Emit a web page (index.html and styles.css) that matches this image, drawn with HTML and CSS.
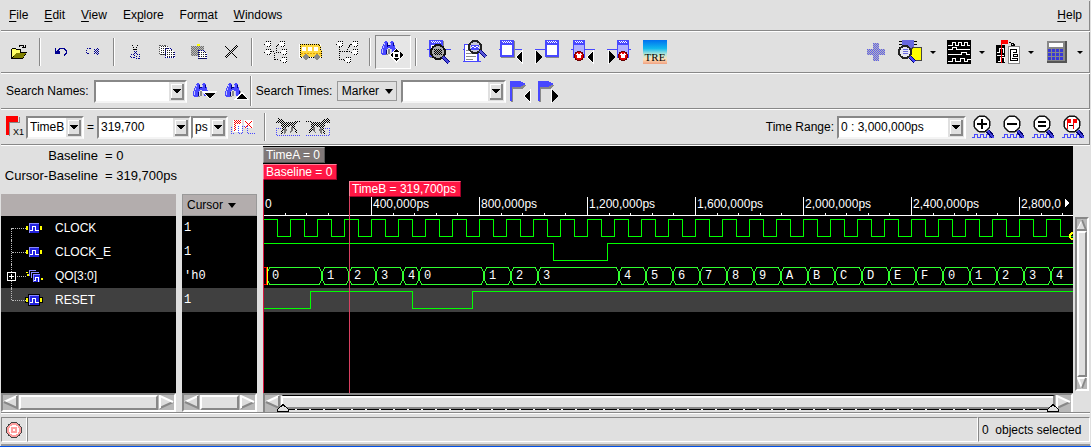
FILE: index.html
```
<!DOCTYPE html>
<html lang="en">
<head>
  <meta charset="UTF-8" />
  <meta name="viewport" content="width=device-width, initial-scale=1.0" />
  <title>Waveform Viewer</title>
  <link rel="stylesheet" href="styles.css">
</head>
<body>
  <svg class="defs" width="0" height="0" aria-hidden="true">
    <defs>
      <pattern id="dk" width="2" height="2" patternUnits="userSpaceOnUse"><path fill="#000" d="M0 0h1v1h-1zM1 1h1v1h-1z"/></pattern>
      <pattern id="db" width="2" height="2" patternUnits="userSpaceOnUse"><path fill="#000090" d="M0 0h1v1h-1zM1 1h1v1h-1z"/></pattern>
      <pattern id="dl" width="2" height="2" patternUnits="userSpaceOnUse"><path fill="#4848ff" d="M0 0h1v1h-1zM1 1h1v1h-1z"/></pattern>
      <pattern id="dr" width="2" height="2" patternUnits="userSpaceOnUse"><path fill="#f00" d="M0 0h1v1h-1zM1 1h1v1h-1z"/></pattern>
      <pattern id="grid" width="2" height="2" patternUnits="userSpaceOnUse"><path fill="#fff" d="M0 0h2v2h-2z"/><path fill="#222" d="M0 0h1v1h-1z"/></pattern>
      <linearGradient id="sky" x1="0" y1="0" x2="0" y2="1"><stop offset="0" stop-color="#0070f0"/><stop offset=".35" stop-color="#10b8ee"/><stop offset=".6" stop-color="#b8e8d8"/><stop offset=".8" stop-color="#ffe0b8"/><stop offset="1" stop-color="#f0a080"/></linearGradient>
      <symbol id="binoc" viewBox="0 0 16 15">
        <path fill="#888" d="M7 8h2v5H7zM5 13h2v1H2v-1zM15 8h1v5h-5v-1h4z"/>
        <path fill="#4848ff" d="M3 1h1V0h2v1h1v3h2V1h1V0h2v1h1v3h1v3h1v5h-1v1h-3v-1h-1V8H9V7H7v1H6v5H5v1H1v-1H0V8h1V5h1V3h1z"/>
        <path fill="#00008a" d="M6 2h1v4H6zM12 2h1v3h-1zM7 4h2v1H7zM5 9h1v4H5zM14 8h1v4h-1z"/>
        <path fill="#c0c0ff" d="M3 2h1v2H3zM9 2h1v2H9zM1 8h1v4H1zM2 5h1v2H2zM10 8h1v4h-1z"/>
      </symbol>
      <symbol id="doc" viewBox="0 0 24 24">
        <path fill="#4848ff" d="M0 9h24v1H0zM2 0h14v17H2z"/>
        <path fill="#fff" d="M4 5h10v10H4z"/>
        <path fill="none" stroke="#fff" d="M4 1.500h1M6 1.500h1M8 1.500h1M10 1.500h1M12 1.500h1M5 2.500h1M7 2.500h1M9 2.500h1M11 2.500h1M13 2.500h1"/>
        <path fill="#888" d="M16 1h1v17H3v-1h13z"/>
      </symbol>
      <symbol id="doc-err" viewBox="0 0 24 24">
        <path fill="#4848ff" d="M0 9h24v1H0zM2 0h12v18H2z"/><path fill="#b0b0ff" d="M3 5h10v12H3z"/>
        <path stroke="#fff" d="M4 1.500h1M6 1.500h1M8 1.500h1M10 1.500h1M5 2.500h1M7 2.500h1M9 2.500h1M11 2.500h1"/>
        <circle cx="8" cy="16" r="5" fill="#600"/><circle cx="8" cy="16" r="4.300" fill="#e00000"/><path stroke="#fff" stroke-width="2" d="M6 14l4 4M10 14l-4 4"/>
      </symbol>
      <symbol id="lens" viewBox="0 0 24 24">
        <path stroke="#00006a" stroke-width="4" d="M15 15l6 7"/><path stroke="#4040d8" stroke-width="2" d="M15 15l6 7"/>
        <circle cx="10" cy="9" r="8" fill="#fff" stroke="#777" stroke-width="2"/><circle cx="10" cy="9" r="8" fill="none" stroke="#111"/>
      </symbol>
      <symbol id="zoomwave" viewBox="0 0 24 24">
        <path fill="none" stroke="#4848ff" d="M0 22.500h2.500V19.500h3V22.500h3V19.500h3V22.500h3V19.500h3V22.500h4"/><use href="#lens" width="24" height="24"/>
      </symbol>
      <symbol id="tri-l" viewBox="0 0 8 14"><path fill="#fff" d="M8 0v14L0 7z"/><path fill="#000" d="M7 1v12L1 7z"/></symbol>
      <symbol id="tri-r" viewBox="0 0 8 14"><path fill="#fff" d="M0 0v14l8-7z"/><path fill="#000" d="M1 1v12l6-6z"/></symbol>
      <symbol id="flag" viewBox="0 0 24 24"><path fill="#888" d="M1 1h11l4 3-4 4H3v13H1z"/><path fill="#4848ff" d="M0 0h11v1h2v1h2v2h-2v1h-2v1H2v14H0z"/></symbol>
      <symbol id="node" viewBox="0 0 7 6"><path fill="#fff" stroke="#000" stroke-dasharray="1 1" d="M.5 2.500l2-2h4v5h-4l-2-2z"/></symbol>
      <symbol id="dog" viewBox="0 0 24 18">
        <path fill="url(#dk)" d="M0 3l2-2V0h2v1h2l2 3h9l3-1h4v1h-3l-2 2v4l2 2v3h-2v-2l-3-3-1-2-4 1-2 1-2 4-1 3H5v-3l1-3-1-4-1-2H0z"/>
        <path fill="#777" d="M8 10h2l1 2-2 4H8zM15 9h2v3l-2 3h-1l1-3z"/>
        <path fill="none" stroke="#4848ff" stroke-dasharray="1 1" d="M5 10.500H.5v7H24"/>
      </symbol>
      <symbol id="signal" viewBox="0 0 18 14">
        <path fill="#ff0" d="M1 5h2v4h-2zM15 5h2v4h-2z"/><path fill="#88f" d="M4 2h10v10H4z"/><path fill="#22d" d="M5 3h9v9H5z"/>
        <path fill="none" stroke="#fff" d="M5 9.500h2.500V5.500h3v4h3"/>
      </symbol>
    </defs>
  </svg>

  <nav class="menubar">
    <a href="#file"><u>F</u>ile</a>
    <a href="#edit"><u>E</u>dit</a>
    <a href="#view"><u>V</u>iew</a>
    <a href="#explore">Ex<u>p</u>lore</a>
    <a href="#format">For<u>m</u>at</a>
    <a href="#windows"><u>W</u>indows</a>
    <a class="help" href="#help"><u>H</u>elp</a>
  </nav>

  <div class="toolbar tools">
    <button class="small" aria-label="Open"><svg width="16" height="16"><path fill="#000" d="M0 5h1V4h4v1h5v3h6l-4 7H0z"/><path fill="#ff6" d="M1 5h4v1h4v3H5l-4 5z"/><path fill="#808000" d="M5 9h10l-3 5H2z"/><path fill="none" stroke="#000" d="M8 2.500l1-1h3l1 2M11 3.500h3M14.500 1v3"/></svg></button>
    <span class="sep"></span>
    <button class="small" aria-label="Undo"><svg width="16" height="16"><path fill="none" stroke="#000090" d="M4 7.500l3-3h4l2 2v3l-2 2"/><path fill="#000090" d="M2 4h1v3h4v3H2z"/></svg></button>
    <button class="small" aria-label="Redo"><svg width="16" height="16"><path fill="none" stroke="#000090" stroke-dasharray="1 1" d="M5 4.500H3L1.500 7v2l2 1M5 4.500l2 1"/><path fill="url(#db)" d="M9 5h4v5H9zM12 4h2v7h-2z"/></svg></button>
    <span class="sep"></span>
    <button class="small" aria-label="Cut"><svg width="16" height="16"><path fill="none" stroke="#000" stroke-dasharray="1 1" d="M5.500 1l2 6M10.500 1l-2 6"/><path fill="url(#db)" d="M7 7h3l1 3-1 1-2-2-2 2z"/><path fill="none" stroke="#000090" stroke-dasharray="1 1" d="M3.500 10.500h4v3h-4zM9.500 10.500h3v4h-3z"/></svg></button>
    <button class="small" aria-label="Copy"><svg width="16" height="16"><path fill="url(#grid)" stroke="#555" stroke-dasharray="1 1" d="M.5 1.500h6l3 2v7h-9z"/><path fill="url(#grid)" stroke="#000090" stroke-dasharray="1 1" d="M6.500 4.500h5l4 4v5h-9z"/></svg></button>
    <button class="small" aria-label="Paste"><svg width="16" height="16"><path fill="#bbb" d="M0 2h13v10H0z"/><path fill="url(#dk)" opacity=".4" d="M0 2h13v10H0z"/><path fill="#ff0" d="M6 0h3v2H6z"/><path fill="url(#grid)" stroke="#000090" stroke-dasharray="1 1" d="M7.500 6.500h5l3 3v5h-8z"/></svg></button>
    <button class="small" aria-label="Delete"><svg width="16" height="16"><path fill="none" stroke="url(#dk)" stroke-width="2" d="M2 2l12 12M14 2L2 14"/></svg></button>
    <span class="sep"></span>
    <button aria-label="Scope tree"><svg width="24" height="24"><use href="#node" x="1" y="1" width="7" height="6"/><use href="#node" x="1" y="9" width="7" height="6"/><use href="#node" x="15" y="1" width="7" height="6"/><use href="#node" x="17" y="9" width="7" height="6"/><use href="#node" x="17" y="17" width="7" height="6"/><path fill="none" stroke="#000" stroke-dasharray="1 1" d="M8 11.500h3v8h5M15 5l-2 2v5h3"/></svg></button>
    <button aria-label="Bus"><svg width="24" height="24"><path fill="#fff" d="M0 4h22v14H0z"/><path fill="#ffd840" d="M1 4h20l2 8v5H1z"/><path fill="none" stroke="#000" stroke-dasharray="1 1" d="M1.500 17V4.500h19l2 8v5z"/><path fill="#fff" d="M3 7h4v4H3zM9 7h4v4H9zM15 7h4v4h-4z"/><path stroke="#e0a000" stroke-dasharray="2 1" d="M2 13.500h20"/><path fill="#888" d="M4 16l3-2 3 2v2l-3 2-3-2zM15 16l3-2 3 2v2l-3 2-3-2z"/></svg></button>
    <button aria-label="Trace drivers"><svg width="24" height="24"><use href="#node" x="1" y="1" width="7" height="6"/><use href="#node" x="16" y="1" width="7" height="6"/><use href="#node" x="16" y="9" width="7" height="6"/><use href="#node" x="9" y="17" width="7" height="6"/><path fill="none" stroke="#000" stroke-dasharray="1 1" d="M4.500 7v12.500H9M5 11.500h6l5-8M12 11.500h4"/></svg></button>
    <span class="sep"></span>
    <button class="pressed" aria-label="Find"><svg width="24" height="24"><use href="#binoc" x="0" y="1" width="16" height="15"/><path fill="#fff" d="M8 15l7-7 8 7-8 8z"/><path fill="#000" d="M15 9l3 3h-6zM15 21l3-3h-6zM9 15l3-3v6zM22 15l-3-3v6zM14 14h3v3h-3z"/></svg></button>
    <span class="sep"></span>
    <button aria-label="Zoom window"><svg width="24" height="24"><use href="#doc" width="24" height="24"/><circle cx="11" cy="12" r="7" fill="#aaa" stroke="#111" stroke-width="2"/><path fill="url(#dk)" d="M7 9h8v6H7z"/><path stroke="#00008a" stroke-width="4" d="M16 17l6 6"/><path stroke="#4848d8" stroke-width="2" d="M16 17l6 6"/></svg></button>
    <button aria-label="Zoom text"><svg width="24" height="24"><path fill="#4848ff" d="M1 4h15v18H1zM0 9h1v1H0zM0 21h18v1H0z"/><path fill="#fff" d="M2 5h12v16H2z"/><path stroke="#888" d="M3 10.500h4M3 13.500h9M3 16.500h10M3 19.500h7"/><circle cx="12" cy="7" r="6" fill="#c8c8d8" stroke="#222" stroke-width="2"/><path fill="#4848ff" d="M8 5h8v5H8z"/><path fill="none" stroke="#fff" d="M8 8l2-2 2 2 2-2 2 2"/><path stroke="#000080" stroke-width="4" d="M17 11l6 6"/><path stroke="#5858d8" stroke-width="2" d="M17 11l6 6"/></svg></button>
    <button aria-label="Previous window"><svg width="24" height="24"><use href="#doc" x="-1" width="24" height="24"/><use href="#tri-l" x="16" y="10" width="8" height="14"/></svg></button>
    <button aria-label="Next window"><svg width="24" height="24"><use href="#doc" x="8" width="24" height="24"/><path stroke="#4848ff" d="M0 9.500h9"/><use href="#tri-r" x="0" y="10" width="8" height="14"/></svg></button>
    <button aria-label="Previous error"><svg width="24" height="24"><use href="#doc-err" width="24" height="24"/><use href="#tri-l" x="15" y="10" width="8" height="14"/></svg></button>
    <button aria-label="Next error"><svg width="24" height="24"><use href="#doc-err" x="8" width="24" height="24"/><path stroke="#4848ff" d="M0 9.500h9"/><use href="#tri-r" x="1" y="10" width="8" height="14"/></svg></button>
    <button aria-label="TRE"><svg width="24" height="24"><path fill="url(#sky)" d="M0 0h24v24H0z"/><text class="tre" x="12" y="21">TRE</text></svg></button>

    <span class="spacer"></span>
    <button class="small" aria-label="Add"><svg width="20" height="20"><path fill="#b8b8b8" d="M7 1h6v6h6v6h-6v6H7v-6H1V7h6z"/><path fill="url(#dl)" opacity=".8" d="M7 1h6v6h6v6h-6v6H7v-6H1V7h6z"/></svg></button>
    <button class="drop" aria-label="Design browser"><svg width="24" height="24"><path fill="#000" d="M1 1h18v1H1zM1 4h18v1H1zM1 7h18v1H1z"/><path fill="#6868e0" d="M4 0h12v11H4z"/><path fill="#ff0" stroke="#444" d="M9 12l7-5h7v13h-8z"/><path stroke="#000070" stroke-width="4" d="M11 16l6 6"/><path stroke="#4848ff" stroke-width="2" d="M11 16l6 6"/><circle cx="7" cy="12" r="6" fill="#e4e4f0" stroke="#222" stroke-width="2"/><path stroke="#6868e0" d="M5 9.500h5M5 11.500h5M5 13.500h5"/></svg><i></i></button>
    <button class="drop" aria-label="Waveform window"><svg width="24" height="24"><path fill="#000" d="M0 0h24v24H0z"/><path fill="none" stroke="#fff" d="M1 5.500h4v-3h3v3h3v-3h3v3h3v-3h3v3h3M1 9.500h4v-2h4v2h14M1 14.500h13v-2h5v2h4M1 21.500h4v-3h3v3h5v-3h4v3h3v-2h4"/></svg><i></i></button>
    <button class="drop" aria-label="Send to"><svg width="24" height="24"><path fill="#000" d="M0 5h9v18H0z"/><path fill="none" stroke="#fff" d="M1 12.500h2v-4h4v4M1 15.500h7M2 21.500h2v-4h4v4"/><path fill="#f00" d="M5 0h7v4H6v19H5z"/><path fill="none" stroke="#000" d="M13 2.500l4 1v3M15 4.500l2 2 2-2"/><path fill="#fff" stroke="#888" d="M12.500 6.500h11v17h-11z"/><path fill="none" stroke="#000" d="M14.500 9v12M15 9.500h5v3h-3M17 14.500h4v2h-4zM15 20.500h6v-2h-5"/></svg><i></i></button>
    <button class="drop" aria-label="Calculator"><svg width="24" height="24"><path fill="#555" d="M2 1h20v22H2z"/><path fill="#888" d="M2 1h18v20H2z"/><path fill="#fff" d="M4 3h14v4H4z"/><path stroke="#3838d8" stroke-width="3" stroke-dasharray="3 1" d="M3 10.500h16M3 14.500h16M3 18.500h16"/></svg><i></i></button>
  </div>

  <div class="toolbar search">
    <label for="names">Search Names:</label>
    <select id="names" class="w-names"><option></option></select>
    <button class="plain" aria-label="Search names down"><svg width="28" height="24"><use href="#binoc" x="3" y="4" width="16" height="15"/><path fill="#fff" d="M12 12h15l-7 9z"/><path fill="#000" d="M14 14h11l-5 6z"/></svg></button>
    <button class="plain" aria-label="Search names up"><svg width="28" height="24"><use href="#binoc" x="3" y="4" width="16" height="15"/><path fill="#fff" d="M12 21h15l-7-9z"/><path fill="#000" d="M14 20h11l-5-6z"/></svg></button>
    <span class="sep"></span>
    <label for="times">Search Times:</label>
    <button class="marker">Marker <i></i></button>
    <select id="times" class="w-times"><option></option></select>
    <button class="plain" aria-label="Previous marker"><svg width="24" height="24"><use href="#flag" x="1" y="2" width="24" height="24"/><use href="#tri-l" x="14" y="10" width="8" height="14"/></svg></button>
    <button class="plain" aria-label="Next marker"><svg width="24" height="24"><use href="#flag" x="1" y="2" width="24" height="24"/><use href="#tri-r" x="14" y="10" width="8" height="14"/></svg></button>
  </div>

  <div class="toolbar cursor">
    <svg width="24" height="24"><path fill="#888" d="M4 7h10V2h1v6H5v13H4z"/><path fill="#f00" d="M1 1h12v6H4v13H1z"/><text class="x1" x="8" y="20">X1</text></svg>
    <select class="w-marker" aria-label="Marker"><option>TimeB</option></select>
    <span class="eq">=</span>
    <select class="w-value" aria-label="Marker time"><option>319,700</option></select>
    <select class="w-unit" aria-label="Unit"><option>ps</option></select>
    <button class="plain" aria-label="Delete marker"><svg width="24" height="20"><path fill="#fff" d="M2 3h9v12H2zM13 3h9v8h-9z"/><path fill="url(#dr)" d="M3 3h7v4H5v7H3z"/><path fill="none" stroke="#f00" d="M14 4l7 7M21 4l-7 7"/><path fill="none" stroke="#4848ff" stroke-dasharray="1 1" d="M0 16.500h3M.5 10v6M7.500 9v7.500h4V9.500h2M16 9v7.500h8"/></svg></button>
    <span class="sep"></span>
    <button class="plain dogs" aria-label="Previous edge"><svg width="24" height="18"><use href="#dog" width="24" height="18"/></svg></button>
    <button class="plain dogs" aria-label="Next edge"><svg width="24" height="18"><g transform="matrix(-1 0 0 1 24 0)"><use href="#dog" width="24" height="18"/></g></svg></button>
    <span class="spacer"></span>
    <label for="range">Time Range:</label>
    <select id="range" class="w-range"><option>0 : 3,000,000ps</option></select>
    <button class="plain zoom" aria-label="Zoom in"><svg width="24" height="24"><use href="#zoomwave" width="24" height="24"/><path fill="#000" d="M9 4h2v4h4v2h-4v4H9v-4H5V8h4z"/></svg></button>
    <button class="plain zoom" aria-label="Zoom out"><svg width="24" height="24"><use href="#zoomwave" width="24" height="24"/><path fill="#000" d="M5 8h10v2H5z"/></svg></button>
    <button class="plain zoom" aria-label="Zoom full"><svg width="24" height="24"><use href="#zoomwave" width="24" height="24"/><path fill="#000" d="M6 6h8v2H6zM6 10h8v2H6z"/></svg></button>
    <button class="plain zoom" aria-label="Zoom between markers"><svg width="24" height="24"><use href="#zoomwave" width="24" height="24"/><path fill="#f00" d="M5 4h4v4H6v6H5zM11 4h4v4h-3v6h-1z"/><path stroke="#000" d="M7 10.500h4"/></svg></button>
  </div>

  <main>
    <div class="left">
      <dl class="info">
        <dt>Baseline</dt><dd>= 0</dd>
        <dt>Cursor-Baseline</dt><dd>= 319,700ps</dd>
      </dl>
      <section class="names">
        <div class="head"></div>
        <ul>
          <li><span class="branch"></span><svg width="18" height="14"><use href="#signal" width="18" height="14"/></svg>CLOCK</li>
          <li><span class="branch"></span><svg width="18" height="14"><use href="#signal" width="18" height="14"/></svg>CLOCK_E</li>
          <li><span class="branch"></span><button class="expand" aria-label="Expand QO"><svg width="9" height="9"><path fill="#000" stroke="#fff" d="M.5 .5h8v8h-8z"/><path stroke="#fff" d="M2 4.500h5M4.500 2v5"/></svg></button><svg width="18" height="14"><path fill="#ff0" d="M1 3h2v1h-2zM2 5h2v2h-2zM4 2h1v2h-1zM16 9h2v2h-2z"/><path fill="none" stroke="#88f" d="M4.500 7V1.500h6M6.500 9V3.500h7"/><path fill="#88f" d="M8 5h7v8H8z"/><path fill="#22d" d="M9 6h6v7H9z"/><path fill="none" stroke="#fff" d="M9 11.500h1.500V8.500h3v4"/></svg>QO[3:0]</li>
          <li class="selected"><span class="branch"></span><svg width="18" height="14"><path fill="#000" d="M0 4h3V1h12v3h3v6h-3v3H3v-3H0z"/><use href="#signal" width="18" height="14"/></svg>RESET</li>
        </ul>
        <div class="hscroll"><button class="al" aria-label="Scroll left"></button><span class="thumb"></span><button class="ar" aria-label="Scroll right"></button></div>
      </section>
      <section class="values">
        <button class="head">Cursor <i></i></button>
        <ul>
          <li>1</li>
          <li>1</li>
          <li>'h0</li>
          <li class="selected">1</li>
        </ul>
        <div class="hscroll"><button class="al" aria-label="Scroll left"></button><span class="thumb"></span><button class="ar" aria-label="Scroll right"></button></div>
      </section>
    </div>

    <section class="wave">
      <div class="plot">
        <span class="tag time-a">TimeA = 0</span>
        <span class="tag">Baseline = 0</span>
        <span class="tag time-b">TimeB = 319,700ps</span>
        <svg id="waves" width="100%" height="196"></svg>
        <span class="line-base"></span>
        <span class="line-b"></span>
      </div>
      <div class="hscroll range"><button class="al" aria-label="Scroll left"></button><span class="thumb"></span><button class="ar" aria-label="Scroll right"></button>
        <svg class="knob knob-l" width="12" height="8"><path fill="#e0e0e0" stroke="#000" d="M.5 7.500V5.500L6 .5l5.500 5v2z"/></svg>
        <svg class="knob knob-r" width="12" height="8"><path fill="#e0e0e0" stroke="#000" d="M.5 7.500V5.500L6 .5l5.500 5v2z"/></svg>
      </div>
    </section>

    <div class="vscroll"><button class="au" aria-label="Scroll up"></button><span class="thumb"></span><button class="ad" aria-label="Scroll down"></button></div>
  </main>

  <footer>
    <div class="state"><svg width="16" height="16"><circle cx="8" cy="8" r="7.500" fill="#fff" stroke="#444"/><circle cx="8" cy="8" r="6" fill="none" stroke="#ffa0a0" stroke-width="2"/><circle cx="8" cy="8" r="2.500" fill="#fff" stroke="#ffa0a0" stroke-width="2"/></svg></div>
    <div class="message"></div>
    <div class="count">0&nbsp; objects selected</div>
  </footer>
  <script src="script.js"></script>
</body>
</html>
```
FILE: styles.css
```
* { box-sizing: border-box; }
body { font-family: "Liberation Sans", Arial, sans-serif; font-size: 12px; line-height: 16px; margin: 0; min-height: 100vh; padding: 1px 1px 0; background: #e0e0e0; color: #000; display: flex; flex-direction: column; border-bottom: 1px solid #0050e8; }
svg { display: block; flex: none; shape-rendering: crispEdges; }
.defs { position: absolute; }
button { font: inherit; color: inherit; background: none; border: 0; padding: 0; margin: 0; display: flex; align-items: center; justify-content: center; flex: none; }
ul, dl, dd { margin: 0; padding: 0; list-style: none; }
i { display: inline-block; border: 4px solid transparent; border-top: 5px solid #000; border-bottom: 0; }

.menubar, .toolbar { display: flex; align-items: center; border-bottom: 1px solid #888; border-right: 1px solid #888; box-shadow: 0 1px #fff; margin-bottom: 1px; flex: none; }
.menubar { height: 30px; padding: 0 7px 2px 8px; gap: 16px; }
.menubar a { color: #000; text-decoration: none; }
.menubar u { text-underline-offset: 2px; }
.menubar .help { margin-left: auto; }

.tools { height: 41px; padding: 0 1px 0 2px; }
.tools button { width: 36px; height: 34px; }
.tools .small { width: 32px; }
.tools .pressed { border: 1px solid #888; border-right-color: #fff; border-bottom-color: #fff; background: #e6e6e6; }
.tools .drop { width: 49px; gap: 8px; }
.tools i { border-width: 3px 3px 0; }
.sep { width: 2px; height: 28px; margin: 0 4px; background: #888; border-right: 1px solid #fff; flex: none; }
.spacer { flex: 1; }
.tre { font: 11px "Liberation Serif", serif; text-anchor: middle; }

.search { height: 35px; padding-left: 5px; }
.search label { margin-right: 5px; }
.cursor label { margin-right: 3px; }
.search .sep { margin: 0 4px 0 0; height: 30px; }
.plain { margin-left: 3px; }
.search .plain + .plain { margin-left: 4px; }
.marker { width: 60px; height: 20px; border: 1px solid #999; gap: 6px; margin-right: 4px; }

select {
  appearance: none; font: inherit; color: #000; height: 23px; padding: 0 16px 1px 2px; border: 2px solid #888; border-right-color: #fff; border-bottom-color: #f4f4f4; border-radius: 0;
  background: #fff url("data:image/svg+xml,%3Csvg xmlns='http://www.w3.org/2000/svg' width='16' height='19' shape-rendering='crispEdges'%3E%3Cpath fill='%23e0e0e0' d='M0 0h16v19H0z'/%3E%3Cpath fill='%23888' d='M2 2h13v16H2z'/%3E%3Cpath fill='%23fff' d='M2 2h11v14H2z'/%3E%3Cpath fill='%23e0e0e0' d='M3 3h10v13H3z'/%3E%3Cpath d='M4 7h8l-4 5z'/%3E%3C/svg%3E") right center no-repeat;
}
.w-names { width: 93px; }
.w-times { width: 105px; }
.w-marker { width: 58px; }
.w-value { width: 94px; }
.w-unit { width: 37px; }
.w-range { width: 129px; }

.cursor { height: 35px; padding: 0 3px 0 1px; }
.cursor > svg { margin-left: 3px; margin-right: -3px; }
.eq { width: 13px; text-align: center; }
.x1 { font-size: 9px; }
.cursor .sep { margin: 0 7px 0 9px; }
.dogs + .dogs { margin-left: 6px; }
.plain.zoom { margin-left: 6px; }

main { flex: 1; display: flex; padding-right: 1px; border-bottom: 1px solid #888; }
.left { width: 262px; flex: none; display: grid; grid-template-columns: 175px 75px; grid-template-rows: 48px 1fr; column-gap: 6px; }
.info { grid-column: 1 / 3; display: grid; grid-template-columns: 95px auto; align-content: start; column-gap: 5px; font-size: 13px; line-height: 20px; padding-left: 2px; }
.info dt { text-align: right; }
.info dd { padding-left: 2px; }
.names, .values { display: flex; flex-direction: column; }
.head { height: 22px; background: #b3adad; flex: none; }
.values .head { border: 1px solid #999; gap: 5px; justify-content: flex-start; padding-left: 4px; }
.left ul { flex: 1; background: #000; color: #fff; }
.left li { height: 24px; display: flex; align-items: center; position: relative; }
.names li { padding-left: 24px; gap: 12px; }
.values li { padding-left: 2px; font-family: "Liberation Mono", monospace; }
.left .selected { background: #404040; }
.branch { position: absolute; left: 10px; top: 0; width: 14px; height: 24px; border-left: 1px dotted #bbb; }
.branch::after { content: ""; position: absolute; left: 0; top: 12px; width: 14px; border-top: 1px dotted #bbb; }
li:first-child .branch { top: 12px; height: 12px; }
li:first-child .branch::after { top: 0; }
li.selected .branch { height: 12px; }
.expand { position: absolute; left: 6px; top: 8px; }

.hscroll { height: 19px; flex: none; display: flex; background: #b8b8b8; border: 2px solid #888; border-right-color: #fff; border-bottom-color: #fff; position: relative; }
.hscroll button { width: 16px; height: 15px; background: url("data:image/svg+xml,%3Csvg xmlns='http://www.w3.org/2000/svg' width='16' height='15'%3E%3Cpath fill='%23ddd' d='M1 7L15 1v13z'/%3E%3Cpath fill='none' stroke='%23fff' stroke-width='2' d='M1 7l13-6'/%3E%3Cpath fill='none' stroke='%23888' stroke-width='2' d='M1 7l13 6V1'/%3E%3C/svg%3E") no-repeat; }
.hscroll .ar { background: url("data:image/svg+xml,%3Csvg xmlns='http://www.w3.org/2000/svg' width='16' height='15'%3E%3Cpath fill='%23ddd' d='M15 7L1 1v13z'/%3E%3Cpath fill='none' stroke='%23888' stroke-width='2' d='M15 7L2 13'/%3E%3Cpath fill='none' stroke='%23fff' stroke-width='2' d='M2 13V1l13 6'/%3E%3C/svg%3E") no-repeat; }
.thumb { flex: 1; background: #e0e0e0; border: 2px solid #fff; border-right-color: #888; border-bottom-color: #888; }
.range { border-bottom: 0; }
.range .thumb { border-top: 1px solid #000; border-bottom: 0; box-shadow: inset 0 2px #fff; background: linear-gradient(#888, #888) 0 11px / 100% 2px no-repeat, repeating-linear-gradient(90deg, #000 0 12px, #fff 12px 14px) 0 13px / 100% 1px no-repeat #e0e0e0; }
.knob { position: absolute; bottom: 0; }
.knob-l { left: 12px; }
.knob-r { right: 12px; }

.wave { flex: 1; min-width: 0; display: flex; flex-direction: column; }
.plot { flex: 1; background: #000; color: #fff; position: relative; overflow: hidden; display: flex; flex-direction: column; align-items: flex-start; padding-top: 1px; }
.tag { height: 16px; margin-bottom: 1px; padding: 0 4px 0 2px; background: #ff1744; border: 1px solid #ff8098; border-right-color: #a00028; border-bottom-color: #a00028; line-height: 14px; }
.time-a { background: #807878; border-color: #aaa; border-right-color: #555; border-bottom-color: #555; }
.time-b { margin: 0 0 0 86px; }
.plot text { font-size: 12px; fill: #fff; }
.plot .bus-value { font: 12px "Liberation Mono", monospace; }
.line-base, .line-b { position: absolute; width: 1px; bottom: 0; left: 0; top: 34px; background: #d81840; }
.line-b { left: 86px; top: 51px; background: #d84060; }

.vscroll { width: 14px; margin: 71px 0 21px 2px; background: #b8b8b8; border: 2px solid #888; border-right-color: #fff; border-bottom-color: #fff; display: flex; flex-direction: column; flex: none; }
.vscroll button { width: 10px; height: 12px; background: url("data:image/svg+xml,%3Csvg xmlns='http://www.w3.org/2000/svg' width='10' height='12'%3E%3Cpath fill='%23ddd' d='M5 0l5 11H0z'/%3E%3Cpath fill='none' stroke='%23fff' stroke-width='1' d='M0 11L5 1'/%3E%3Cpath fill='none' stroke='%23888' stroke-width='2' d='M5 1l4 10H0'/%3E%3C/svg%3E") no-repeat; }
.vscroll .ad { background: url("data:image/svg+xml,%3Csvg xmlns='http://www.w3.org/2000/svg' width='10' height='12'%3E%3Cpath fill='%23ddd' d='M5 12L0 1h10z'/%3E%3Cpath fill='none' stroke='%23fff' stroke-width='2' d='M5 11L1 1h9'/%3E%3Cpath fill='none' stroke='%23888' stroke-width='2' d='M5 11L9 1'/%3E%3C/svg%3E") no-repeat; }

footer { height: 33px; flex: none; display: flex; padding: 4px 0 2px; border-bottom: 2px solid #999; box-shadow: inset 0 1px #fff; }
footer div { border-top: 1px solid #888; border-left: 1px solid #888; border-bottom: 1px solid #fff; border-right: 1px solid #fff; display: flex; align-items: center; }
.state { width: 26px; justify-content: center; }
.message { flex: 1; }
.count { width: 112px; padding-left: 3px; }
```
FILE: script.js
```
// 27px for every 100,000ps
const step = 27;
const end = 3000;
const svg = document.getElementById("waves");
let out = "";

out += `<rect x="0" y="91" width="100%" height="24" fill="#404040"/>`;

// ruler
for (let i = 0; i <= 7; i++) {
  const x = i * step * 4;
  if (i > 0) out += `<path stroke="#fff" d="M${x + 0.5} 0V18"/>`;
  for (let m = 1; m < 5; m++) {
    out += `<path stroke="#fff" d="M${Math.round(x + m * 21.6) + 0.5} 16V18"/>`;
  }
  const label = i === 0 ? "0" : i === 7 ? "2,800,0" : (i * 400000).toLocaleString("en-US") + "ps";
  out += `<text x="${x + 2}" y="11">${label}</text>`;
}
out += `<path stroke="#fff" d="M0 18.5H${end}"/><path fill="#fff" d="M802 2l4 4-4 4z"/>`;

// clock
let clock = "M0 22.5";
for (let i = 0; i < 30; i++) {
  clock += `H${i * step + 14.5}V39.5H${(i + 1) * step + 0.5}V22.5`;
}
const paths = [
  clock,
  `M0 46.5H290.5V63.5H344.5V46.5H${end}`,
  `M0 111.5H47.5V94.5H149.5V111.5H209.5V94.5H${end}`
];
paths.forEach(d => {
  out += `<path fill="none" stroke="#00ff00" d="${d}"/>`;
});

// bus values, [start, text]
const bus = [[4, "0"], [59, "1"], [86, "2"], [113, "3"], [140, "4"], [156, "0"], [221, "1"], [248, "2"], [275, "3"]];
"456789ABCDEF01234".split("").forEach((value, i) => bus.push([356 + i * step, value]));
bus.forEach(([x, value], i) => {
  const next = i + 1 < bus.length ? bus[i + 1][0] : x + step;
  out += `<path fill="none" stroke="#30ff30" d="M${x + 2} 70.5H${next - 2}M${x + 2} 87.5H${next - 2}"/>`;
  out += `<path fill="none" stroke="#30ff30" d="M${x + 2.5} 71L${x + 0.5} 75V83L${x + 2.5} 87M${next - 2.5} 71L${next - 0.5} 75V83L${next - 2.5} 87"/>`;
  out += `<text class="bus-value" x="${x + 5}" y="82">${value}</text>`;
});
out += `<path fill="none" stroke="#f00" d="M0 70.5H3.5V87.5H0"/><path stroke="#ff0" d="M4.5 70V88"/>`;
out += `<circle cx="810" cy="39" r="3" fill="none" stroke="#ff0" stroke-width="2"/>`;

svg.innerHTML = out;
```
